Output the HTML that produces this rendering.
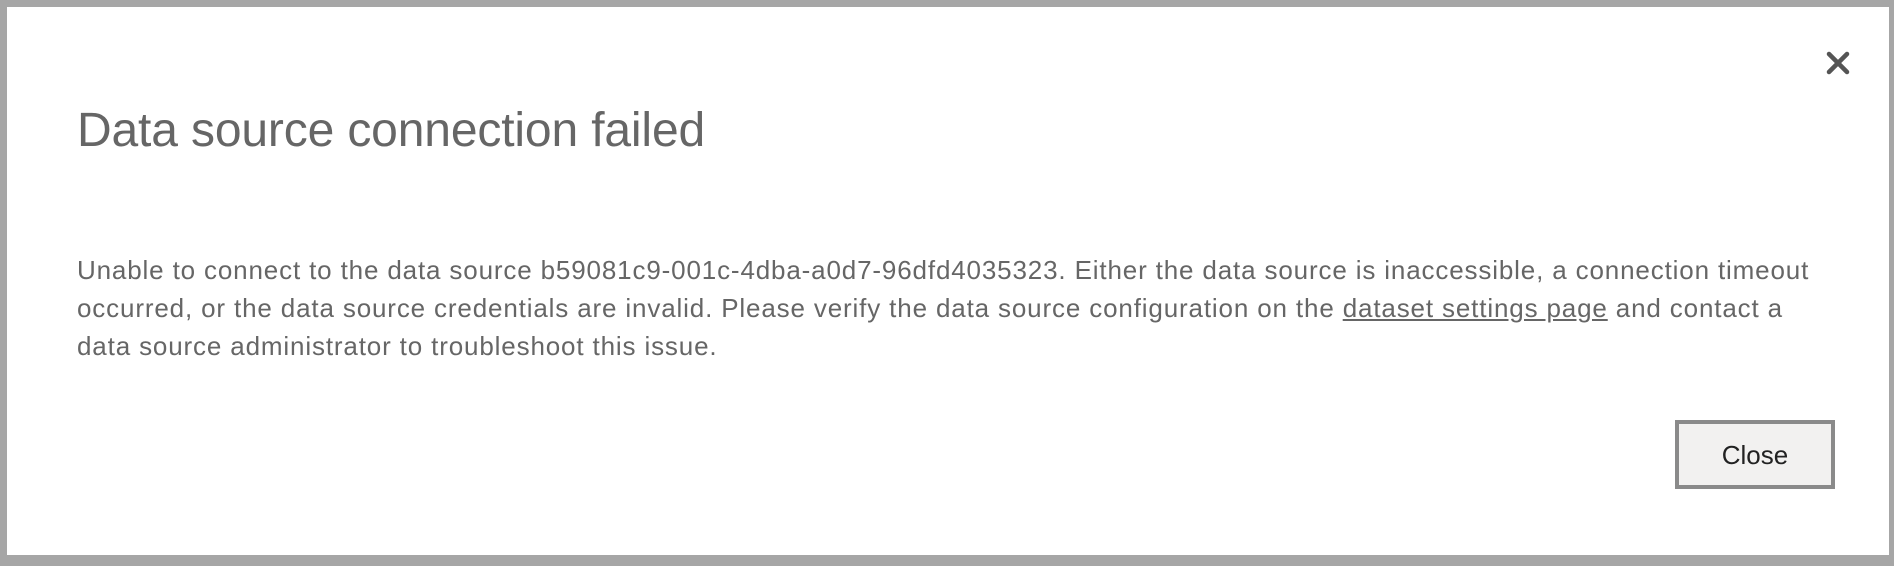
<!DOCTYPE html>
<html><head><meta charset="utf-8"><style>
html,body{margin:0;padding:0;}
body{width:1894px;height:566px;background:#a6a6a6;position:relative;overflow:hidden;font-family:"Liberation Sans",sans-serif;}
.dlg{position:absolute;left:7px;top:7px;width:1882px;height:548px;background:#fff;}
.title{position:absolute;left:77px;top:103px;font-size:48px;color:#666;white-space:nowrap;letter-spacing:-0.15px;}
.body{position:absolute;left:77px;top:251px;font-size:26px;line-height:38px;color:#666;white-space:nowrap;letter-spacing:0.85px;}
.body u{color:#666;}
.btn{position:absolute;left:1675px;top:420px;width:152px;height:61px;border:4px solid #8a8a8a;background:#f2f1f0;color:#222;font-size:26px;text-align:center;line-height:63px;}
.x{position:absolute;left:1826px;top:51px;}
</style></head><body>
<div class="dlg"></div>
<svg class="x" width="24" height="24" viewBox="0 0 24 24"><path d="M3 3L21 21M21 3L3 21" stroke="#555" stroke-width="4.5" stroke-linecap="round"/></svg>
<div class="title">Data source connection failed</div>
<div class="body">Unable to connect to the data source b59081c9-001c-4dba-a0d7-96dfd4035323. Either the data source is inaccessible, a connection timeout<br>occurred, or the data source credentials are invalid. Please verify the data source configuration on the <u>dataset settings page</u> and contact a<br>data source administrator to troubleshoot this issue.</div>
<div class="btn">Close</div>
</body></html>
